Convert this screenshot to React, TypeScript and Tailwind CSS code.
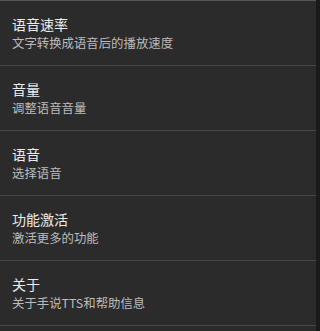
import React from "react";

const items = [
  { title: "语音速率", summary: "文字转换成语音后的播放速度" },
  { title: "音量", summary: "调整语音音量" },
  { title: "语音", summary: "选择语音" },
  { title: "功能激活", summary: "激活更多的功能" },
  { title: "关于", summary: "关于手说TTS和帮助信息" },
];

export default function App() {
  return (
    <div
      className="flex h-[331px] w-[320px] overflow-hidden bg-[#1a1a1a]"
      style={{ fontFamily: '"Noto Sans CJK SC", "Noto Sans", sans-serif' }}
    >
      <div className="flex w-[316px] flex-col border-t border-[#555555] bg-[#2b2b2b]">
        {items.map((item) => (
          <div key={item.title} className="flex h-[65px] shrink-0 flex-col border-b border-[#474747] pl-3 pt-[13px]">
            <p className="text-[14px] leading-[20px] text-[#ececec]">{item.title}</p>
            <p className="text-[12.4px] leading-[19px] text-[#bcbcbc]">{item.summary}</p>
          </div>
        ))}
      </div>
    </div>
  );
}
